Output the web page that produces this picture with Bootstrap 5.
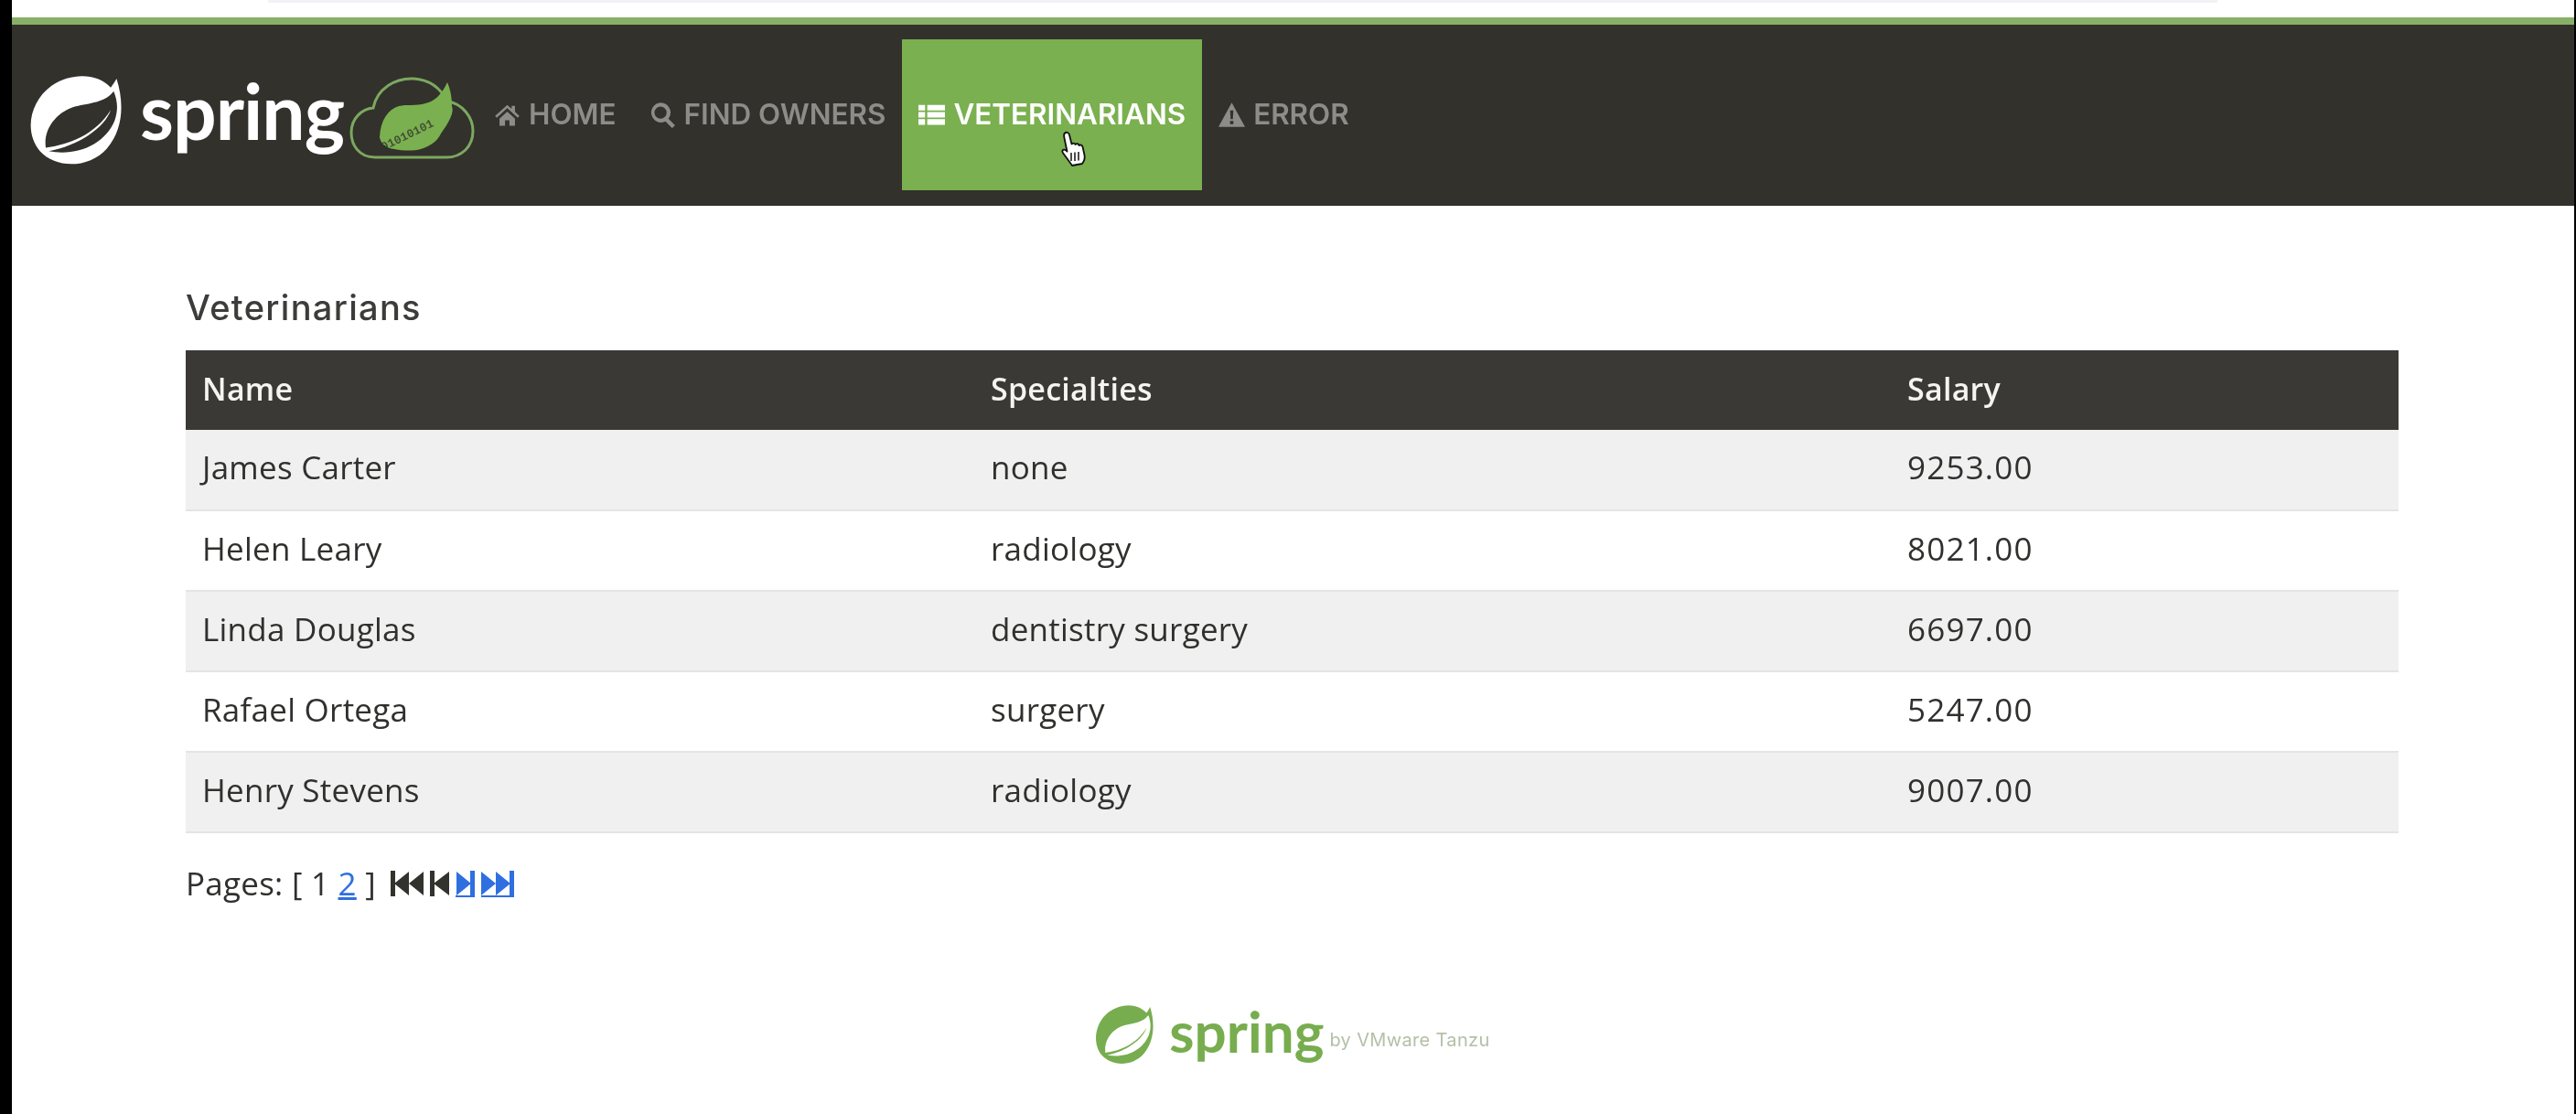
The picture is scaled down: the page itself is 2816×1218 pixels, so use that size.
<!DOCTYPE html>
<html lang="en">
<head>
  <meta charset="UTF-8" />
  <title>Veterinarians</title>
  <link href="https://cdn.jsdelivr.net/npm/bootstrap@5.3.3/dist/css/bootstrap.min.css" rel="stylesheet" />
  <style>
    html, body { height: 100%; }
    body {
      background: #000;
      color: #30302e;
      font-family: "Open Sans", "Liberation Sans", sans-serif;
      font-size: 35px;
      letter-spacing: .25px;
      padding: 0 2px 0 13px;
    }
    .page-shell { background: #fff; min-height: 100%; filter: blur(.6px); }
    .top-sliver { background: #f1f2f5; height: 3px; margin: 0 390px 16px 280px; }
    .top-bar {
      background: #32312c;
      border-top: 8px solid #88b066;
      height: 206px;
      padding: 16px 0 0 19px;
      align-items: flex-start;
      letter-spacing: 0;
    }
    .brand-mark { color: #fff; width: 106px; height: 98px; margin-top: 40px; }
    .brand-word {
      color: #fff;
      font-family: "Lato", sans-serif;
      font-weight: 700;
      font-size: 84px;
      line-height: 1;
      letter-spacing: -1px;
      margin: 36px 6px 0 15px;
    }
    .cloud-mark { width: 138px; height: 92px; margin-top: 40px; }
    .nav-items { margin-left: 2px; }
    .nav-items .nav-link {
      position: relative;
      color: #8c8c88;
      font-family: "Inter", sans-serif;
      font-weight: 600;
      font-size: 31.400px;
      line-height: 1;
      height: 165px;
      padding: 0 18px;
      gap: 9px;
      letter-spacing: 0;
    }
    .nav-items .nav-link.active { background: #7ab04f; color: #fff; }
    .nav-items svg.nav-ico { width: 29px; height: 29px; fill: currentColor; }
    .hand-cursor { position: absolute; left: 172px; top: 100px; width: 30px; height: 40px; }
    .content-wrap { padding: 0 192px 0 190px; }
    .page-title {
      font-family: "Inter", sans-serif;
      font-weight: 500;
      font-size: 38px;
      letter-spacing: 1.300px;
      color: #3c3c3a;
      margin: 89px 0 25px;
      line-height: 44px;
    }
    .vets-table {
      --bs-table-striped-bg: #f0f0f0;
      --bs-table-striped-color: #30302e;
      --bs-table-color: #30302e;
      table-layout: fixed;
      width: 2419px;
      margin-bottom: 0;
      font-size: 35px;
    }
    .vets-table th {
      --bs-table-bg: #3b3935;
      --bs-table-color: #f4f4f0;
      color: #f4f4f0;
      font-weight: 600;
      font-size: 34px;
      height: 87px;
      padding: 0 18px 3px;
      vertical-align: middle;
      border: 0;
    }
    .vets-table td {
      height: 88px;
      padding: 0 18px 4px;
      vertical-align: middle;
      border-bottom: 2px solid #e4e4e4;
    }
    .vets-table td.money { letter-spacing: 1.200px; }
    .pager-row { margin-top: 35px; line-height: 40px; }
    .pager-row a { color: #2f6fe0; }
    .pager-set { margin-left: 15px; gap: 5px; }
    .pager-ico { height: 32px; }
    .pager-ico.wide { width: 38px; }
    .pager-ico.thin { width: 23px; }
    .pager-ico.off { fill: #33332e; }
    .pager-ico.on { fill: #2f6fe0; }
    .foot-logo { margin-top: 110px; padding-left: 1px; letter-spacing: 0; }
    .foot-mark { color: #77ad4e; width: 67px; height: 65px; }
    .foot-word {
      color: #77ad4e;
      font-family: "Lato", sans-serif;
      font-weight: 700;
      font-size: 62px;
      line-height: 1;
      margin: 0 6px 8px 14px;
    }
    .foot-by { color: #b4c0a8; font-size: 20px; font-family: "Inter", sans-serif; margin-top: 12px; letter-spacing: .35px; }
    .spritesheet { display: none; }
  </style>
</head>
<body>
  <svg class="spritesheet">
    <symbol id="leaf" viewBox="0 0 100 100" preserveAspectRatio="none">
      <path fill="currentColor" fill-rule="evenodd" d="M90 3C98 30 97 60 80 81C62 103 28 104 11 84C-6 62 1 28 23 11C44 -4 70 -3 84 13C86 10 88 7 90 3ZM87 17C78 30 62 30 48 34C30 39 14 58 17 80C40 77 68 66 84 38C78 58 50 78 20 84C50 90 78 76 88 50C92 38 91 27 87 17Z" />
    </symbol>
  </svg>

  <div class="page-shell">
    <div class="top-sliver"></div>
    <nav class="top-bar d-flex">
      <svg class="brand-mark"><use href="#leaf" /></svg>
      <span class="brand-word">spring</span>
      <svg class="cloud-mark" viewBox="0 0 138 92">
        <path fill="none" stroke="#7ca860" stroke-width="3" d="M28 89C10 89 2 75 2 62C2 46 14 36 26 35C30 14 50 2 70 3C88 4 100 14 107 28C124 30 135 46 135 60C135 78 122 89 106 89Z" />
        <path fill="#7ab04f" d="M107 7C100 22 92 28 83 30C73 33 62 31 54 33C42 37 34 48 33 67C34 74 40 79 49 80C60 82 70 82 78 80C90 76 97 70 100 63C108 52 115 40 112 33C112 22 110 14 107 7Z" />
        <text x="37" y="82" transform="rotate(-26 37 82)" font-size="13" font-weight="700" font-family="Liberation Mono, monospace" fill="#32312c" opacity=".75">01010101</text>
      </svg>
      <ul class="nav nav-items">
        <li class="nav-item">
          <a class="nav-link d-flex align-items-center" href="#">
            <svg class="nav-ico" viewBox="0 0 24 24"><path d="M12 3 1 13l1.500 1.600L12 6l9.500 8.600L23 13l-4-3.600V4h-3v2.700zM5 15.500V22h5v-5h4v5h5v-6.500L12 9z" /></svg>
            HOME
          </a>
        </li>
        <li class="nav-item">
          <a class="nav-link d-flex align-items-center" href="#">
            <svg class="nav-ico" viewBox="0 0 24 24"><path fill-rule="evenodd" d="M10 1a9 9 0 0 1 7.100 14.500l6 6-2.600 2.600-6-6A9 9 0 1 1 10 1zm0 3.500a5.500 5.500 0 1 0 0 11 5.500 5.500 0 0 0 0-11z" /></svg>
            FIND OWNERS
          </a>
        </li>
        <li class="nav-item">
          <a class="nav-link active d-flex align-items-center" href="#">
            <svg class="nav-ico" viewBox="0 0 24 24"><path d="M0 3h6v5H0zM8 3h16v5H8zM0 9.500h6v5H0zM8 9.500h16v5H8zM0 16h6v5H0zM8 16h16v5H8z" /></svg>
            VETERINARIANS
            <svg class="hand-cursor" viewBox="0 0 30 40"><path fill="#fff" stroke="#111" stroke-width="1.800" stroke-linejoin="round" d="M6 2.500c2-1.500 4.500-.5 5 2l2.500 10c1.500-1.500 3.500-1 4 .5 1.500-1.500 3.500-1 4 1 1.500-1 3.500-.5 4 1.500l2 9c.8 4-.5 7-2.500 9.500l-11 2c-2-3-5-7-8-11-1.500-2-3.500-4-2.500-5.500 1-1.500 3-1 5 1L5.500 8C5 6 5 3.500 6 2.500z" /><path stroke="#111" stroke-width="1.500" d="M13 24v9M17 23.500v9.500M21 23v9.500" /></svg>
          </a>
        </li>
        <li class="nav-item">
          <a class="nav-link d-flex align-items-center" href="#">
            <svg class="nav-ico" viewBox="0 0 24 24"><path fill-rule="evenodd" d="M12 1 24 23H0zM10.500 8l.5 8h2l.5-8zM10.500 17.500V20.500h3V17.500z" /></svg>
            ERROR
          </a>
        </li>
      </ul>
    </nav>

    <div class="content-wrap">
      <h2 class="page-title">Veterinarians</h2>
      <table class="table table-striped vets-table">
        <colgroup>
          <col width="862" />
          <col width="1002" />
          <col width="555" />
        </colgroup>
        <thead>
          <tr><th>Name</th><th>Specialties</th><th>Salary</th></tr>
        </thead>
        <tbody>
          <tr><td>James Carter</td><td>none</td><td class="money">9253.00</td></tr>
          <tr><td>Helen Leary</td><td>radiology</td><td class="money">8021.00</td></tr>
          <tr><td>Linda Douglas</td><td>dentistry surgery</td><td class="money">6697.00</td></tr>
          <tr><td>Rafael Ortega</td><td>surgery</td><td class="money">5247.00</td></tr>
          <tr><td>Henry Stevens</td><td>radiology</td><td class="money">9007.00</td></tr>
        </tbody>
      </table>

      <div class="pager-row d-flex align-items-center">
        <span>Pages: [ 1 <a href="#">2</a> ]</span>
        <span class="pager-set d-flex align-items-center">
          <svg class="pager-ico wide off" viewBox="0 0 38 32"><path d="M1 2h5v28H1zM5 16 21 3v26zM21 16 37 3v26z" /></svg>
          <svg class="pager-ico thin off" viewBox="0 0 23 32"><path d="M1 2h5v28H1zM5 16 22 3v26z" /></svg>
          <svg class="pager-ico thin on" viewBox="0 0 23 32"><path d="M2 3 18 16 2 29zM17 2h5v28h-5z" /><path d="M1 29h21v2H1z" /></svg>
          <svg class="pager-ico wide on" viewBox="0 0 38 32"><path d="M1 3 17 16 1 29zM17 3 33 16 17 29zM32 2h5v28h-5z" /><path d="M1 29h36v2H1z" /></svg>
        </span>
      </div>

      <div class="foot-logo d-flex justify-content-center align-items-center">
        <svg class="foot-mark"><use href="#leaf" /></svg>
        <span class="foot-word">spring</span>
        <span class="foot-by">by VMware Tanzu</span>
      </div>
    </div>
  </div>
</body>
</html>
